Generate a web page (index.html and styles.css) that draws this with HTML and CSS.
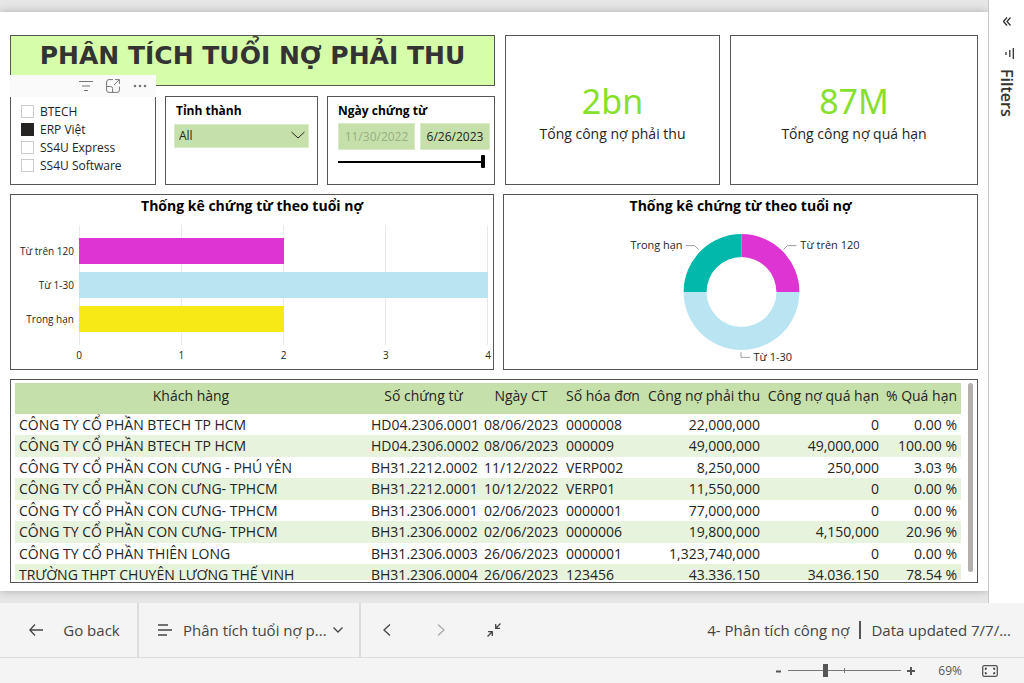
FILE: index.html
```html
<!DOCTYPE html>
<html lang="vi">
<head>
<meta charset="utf-8">
<meta name="viewport" content="width=device-width, initial-scale=1">
<title>Phân tích tuổi nợ phải thu</title>
<link rel="stylesheet" href="styles.css">
</head>
<body>
<div class="app">
  <div class="workspace">
    <main class="stage">
      <div class="report">
        <section class="row row-top">
          <div class="lead">
            <h1 class="panel title">PHÂN TÍCH TUỔI NỢ PHẢI THU</h1>
            <div class="slicers">
              <div class="panel slicer company">
                <div class="visual-header">
                  <button type="button" aria-label="Filter">
                    <svg width="14" height="12" viewBox="0 0 14 12"><path d="M0 1.500h14M3 6h8M5 10.500h4"/></svg>
                  </button>
                  <button type="button" aria-label="Focus mode">
                    <svg width="14" height="14" viewBox="0 0 14 14"><path d="M7 .6H3A2.400 2.400 0 0 0 .6 3v8A2.400 2.400 0 0 0 3 13.400h8a2.400 2.400 0 0 0 2.400-2.400V7.500M.6 7.500h4a2 2 0 0 1 2 2v3.900M8 6l5.200-5.200M9 .6h4.400V5"/></svg>
                  </button>
                  <button type="button" aria-label="More options">
                    <svg class="dots" width="14" height="4" viewBox="0 0 14 4"><circle cx="2" cy="2" r="1.300"/><circle cx="7" cy="2" r="1.300"/><circle cx="12" cy="2" r="1.300"/></svg>
                  </button>
                </div>
                <label class="check"><input type="checkbox">BTECH</label>
                <label class="check"><input type="checkbox" checked>ERP Việt</label>
                <label class="check"><input type="checkbox">SS4U Express</label>
                <label class="check"><input type="checkbox">SS4U Software</label>
              </div>
              <div class="panel slicer province">
                <label class="slicer-title" for="province">Tỉnh thành</label>
                <div class="dropdown">
                  <select id="province"><option>All</option></select>
                  <svg width="14" height="8" viewBox="0 0 14 8"><path d="M.5 1L7 7l6.500-6"/></svg>
                </div>
              </div>
              <div class="panel slicer dates">
                <div class="slicer-title">Ngày chứng từ</div>
                <div class="date-row">
                  <input class="date muted" type="text" value="11/30/2022" aria-label="Từ ngày">
                  <input class="date" type="text" value="6/26/2023" aria-label="Đến ngày">
                </div>
                <input class="date-range" type="range" min="0" max="100" value="100" aria-label="Khoảng ngày">
              </div>
            </div>
          </div>
          <div class="panel card"><div class="value">2bn</div><div class="caption">Tổng công nợ phải thu</div></div>
          <div class="panel card"><div class="value">87M</div><div class="caption">Tổng công nợ quá hạn</div></div>
        </section>

        <section class="row row-charts">
          <div class="panel chart">
            <h2>Thống kê chứng từ theo tuổi nợ</h2>
            <div class="bar-chart">
              <div class="categories"><span>Từ trên 120</span><span>Từ 1-30</span><span>Trong hạn</span></div>
              <div class="plot">
                <div class="gridlines"><i></i><i></i><i></i><i></i></div>
                <div class="bars">
                  <div class="bar magenta" style="width:50%"></div>
                  <div class="bar sky" style="width:100%"></div>
                  <div class="bar yellow" style="width:50%"></div>
                </div>
              </div>
              <div class="axis"><span>0</span><span>1</span><span>2</span><span>3</span><span>4</span></div>
            </div>
          </div>
          <div class="panel chart">
            <h2>Thống kê chứng từ theo tuổi nợ</h2>
            <svg class="donut" viewBox="0 0 474 148" role="img" aria-label="Thống kê chứng từ theo tuổi nợ">
              <path fill="#dd34d3" d="M238 15a58 58 0 0 1 58 58h-23a35 35 0 0 0-35-35z"/>
              <path fill="#b9e5f3" d="M296 73a58 58 0 0 1-116 0h23a35 35 0 0 0 70 0z"/>
              <path fill="#01b8aa" d="M180 73a58 58 0 0 1 58-58v23a35 35 0 0 0-35 35z"/>
              <path class="leader" d="M182 26.500h9l4 4M280 30.500l4-4h9M237.500 133v5.500h9"/>
              <text x="179" y="30" text-anchor="end">Trong hạn</text>
              <text x="297" y="30">Từ trên 120</text>
              <text x="250" y="142">Từ 1-30</text>
            </svg>
          </div>
        </section>

        <section class="panel table-panel">
          <div class="table-clip">
            <table>
              <colgroup><col><col class="c-doc"><col class="c-date"><col class="c-inv"><col class="c-due"><col class="c-over"><col class="c-pct"></colgroup>
              <thead><tr><th>Khách hàng</th><th>Số chứng từ</th><th>Ngày CT</th><th>Số hóa đơn</th><th>Công nợ phải thu</th><th>Công nợ quá hạn</th><th>% Quá hạn</th></tr></thead>
              <tbody>
                <tr><td>CÔNG TY CỔ PHẦN BTECH TP HCM</td><td>HD04.2306.0001</td><td>08/06/2023</td><td>0000008</td><td>22,000,000</td><td>0</td><td>0.00 %</td></tr>
                <tr><td>CÔNG TY CỔ PHẦN BTECH TP HCM</td><td>HD04.2306.0002</td><td>08/06/2023</td><td>000009</td><td>49,000,000</td><td>49,000,000</td><td>100.00 %</td></tr>
                <tr><td>CÔNG TY CỔ PHẦN CON CƯNG - PHÚ YÊN</td><td>BH31.2212.0002</td><td>11/12/2022</td><td>VERP002</td><td>8,250,000</td><td>250,000</td><td>3.03 %</td></tr>
                <tr><td>CÔNG TY CỔ PHẦN CON CƯNG- TPHCM</td><td>BH31.2212.0001</td><td>10/12/2022</td><td>VERP01</td><td>11,550,000</td><td>0</td><td>0.00 %</td></tr>
                <tr><td>CÔNG TY CỔ PHẦN CON CƯNG- TPHCM</td><td>BH31.2306.0001</td><td>02/06/2023</td><td>0000001</td><td>77,000,000</td><td>0</td><td>0.00 %</td></tr>
                <tr><td>CÔNG TY CỔ PHẦN CON CƯNG- TPHCM</td><td>BH31.2306.0002</td><td>02/06/2023</td><td>0000006</td><td>19,800,000</td><td>4,150,000</td><td>20.96 %</td></tr>
                <tr><td>CÔNG TY CỔ PHẦN THIÊN LONG</td><td>BH31.2306.0003</td><td>26/06/2023</td><td>0000001</td><td>1,323,740,000</td><td>0</td><td>0.00 %</td></tr>
                <tr><td>TRƯỜNG THPT CHUYÊN LƯƠNG THẾ VINH</td><td>BH31.2306.0004</td><td>26/06/2023</td><td>123456</td><td>43,336,150</td><td>34,036,150</td><td>78.54 %</td></tr>
              </tbody>
            </table>
          </div>
          <div class="scroll-thumb"></div>
        </section>
      </div>
    </main>
    <aside class="filters">
      <button type="button" aria-label="Expand filters">
        <svg width="8" height="9" viewBox="0 0 8 9"><path d="M4 .5l-3.500 4 3.500 4M7.500 .5l-3.500 4 3.500 4"/></svg>
      </button>
      <svg width="9" height="11" viewBox="0 0 9 11"><path d="M8.300 0v11M4.800 2v7M1 4v3"/></svg>
      <span>Filters</span>
    </aside>
  </div>

  <footer class="nav-bar">
    <button type="button" class="nav-item back">
      <svg width="14" height="12" viewBox="0 0 14 12"><path d="M6 .5L.8 6 6 11.500M1 6h13"/></svg>
      Go back
    </button>
    <button type="button" class="nav-item pages">
      <svg width="14" height="12" viewBox="0 0 14 12"><path d="M0 1h10M0 6h14M0 11h9"/></svg>
      Phân tích tuổi nợ p...
      <svg class="chev" width="10" height="6" viewBox="0 0 10 6"><path d="M.5 .5L5 5 9.500 .5"/></svg>
    </button>
    <div class="pager">
      <button type="button" aria-label="Previous page"><svg width="8" height="12" viewBox="0 0 8 12"><path d="M7 .5L1 6l6 5.500"/></svg></button>
      <button type="button" class="off" aria-label="Next page"><svg width="8" height="12" viewBox="0 0 8 12"><path d="M1 .5L7 6l-6 5.500"/></svg></button>
      <button type="button" aria-label="Exit full screen"><svg width="14" height="14" viewBox="0 0 14 14"><path d="M13.500 .5L9 5M8.700 1v4.300H13M.5 13.500L5 9M1 8.700h4.300V13"/></svg></button>
    </div>
    <div class="status"><span>4- Phân tích công nợ</span><span class="updated">Data updated 7/7/...</span></div>
  </footer>

  <div class="zoom-bar">
    <button type="button" aria-label="Zoom out"><svg width="8" height="8" viewBox="0 0 8 8"><path d="M2 4.500h5"/></svg></button>
    <div class="zoom-track"><input type="range" min="0" max="100" value="32" aria-label="Zoom"></div>
    <button type="button" aria-label="Zoom in"><svg width="8" height="8" viewBox="0 0 8 8"><path d="M0 4h8M4 0v8"/></svg></button>
    <output>69%</output>
    <button type="button" aria-label="Fit to page"><svg class="fit" width="16" height="12" viewBox="0 0 16 12"><rect x=".7" y=".7" width="14.600" height="10.600" rx="1.500"/><path d="M3.500 5V3.500H5M11 3.500h1.500V5M12.500 7v1.500H11M5 8.500H3.500V7"/></svg></button>
  </div>
</div>
</body>
</html>
```
FILE: styles.css
```css
* { box-sizing: border-box; }
body {
  margin: 0;
  font-family: "Open Sans", "Noto Sans", sans-serif;
  color: #252423;
}
h1, h2 { margin: 0; }
button, input, select { font: inherit; color: inherit; }
button { border: 0; padding: 0; background: none; display: flex; align-items: center; justify-content: center; }
svg { flex: none; fill: none; stroke: currentColor; stroke-width: 1; }

.app { display: flex; flex-direction: column; min-height: 100vh; }
.workspace { flex: 1; display: flex; }

.stage { flex: 1; min-width: 0; padding: 12px 0; background: #e6e6e6; }
.report {
  height: 100%;
  display: flex;
  flex-direction: column;
  gap: 9px;
  padding: 23px 10px 8px;
  background: #fff;
  box-shadow: 0 0 8px rgba(0, 0, 0, .25);
}
.panel { border: 1px solid #555; background: #fff; }
.row { display: grid; }

/* Title, slicers and cards */
.row-top { grid-template-columns: 485fr 215fr 248fr; gap: 10px; }
.lead { display: flex; flex-direction: column; gap: 10px; }
.title {
  height: 51px;
  background: #d5fdaa;
  color: #333;
  text-align: center;
  font: bold 25px/40px "DejaVu Sans", sans-serif;
  white-space: nowrap;
}
.slicers { display: grid; grid-template-columns: 146fr 153fr 168fr; gap: 9px; height: 89px; }
.slicer { min-width: 0; position: relative; }
.visual-header {
  position: absolute;
  left: -1px;
  right: -1px;
  bottom: 100%;
  height: 22px;
  display: flex;
  justify-content: flex-end;
  gap: 13px;
  padding-right: 9px;
  background: #fafafa;
  color: #777;
}
.dots { fill: currentColor; stroke: none; }
.company { padding: 5px 10px; }
.check { display: flex; align-items: center; gap: 6px; height: 18px; font-size: 12px; white-space: nowrap; }
.check input {
  appearance: none;
  width: 13px;
  height: 13px;
  margin: 0;
  border: 1px solid #ccc;
  background: #fff;
}
.check input:checked { background: #252423; border-color: #252423; }
.slicer-title { display: block; height: 21px; font: bold 12px/18px "Open Sans", sans-serif; color: #000; }
.province { padding: 5px 8px; }
.province .slicer-title { padding-left: 2px; }
.dropdown { position: relative; height: 24px; }
.dropdown select {
  appearance: none;
  width: 100%;
  height: 100%;
  padding: 0 4px;
  border: 1px solid #d9ebc8;
  border-radius: 0;
  background: #c6e0ab;
  font-size: 12px;
}
.dropdown svg { position: absolute; right: 4px; top: 8px; pointer-events: none; }
.dates { padding: 5px 4px 0 10px; }
.date-row { display: grid; grid-template-columns: 77fr 70fr; gap: 5px; }
.date {
  width: 100%;
  min-width: 0;
  height: 27px;
  padding: 0;
  border: 1px solid #d9ebc8;
  background: #c6e0ab;
  text-align: center;
  font-size: 12px;
}
.date.muted { color: #98ae82; }
.date-range {
  appearance: none;
  display: block;
  width: 147px;
  height: 13px;
  margin: 5px 0 0;
  background: linear-gradient(#000, #000) center / 100% 2px no-repeat;
}
.date-range::-webkit-slider-thumb { appearance: none; width: 4px; height: 13px; border-radius: 1px; background: #000; }
.card { display: flex; flex-direction: column; align-items: center; padding-top: 43px; }
.value { font: 34px/44px "Noto Sans", sans-serif; color: #86e02c; }
.caption { font-size: 14px; line-height: 22px; white-space: nowrap; }

/* Charts */
.row-charts { grid-template-columns: 484fr 475fr; gap: 9px; height: 176px; }
.chart { display: flex; flex-direction: column; min-width: 0; }
.chart h2 { font-size: 14px; line-height: 22px; text-align: center; color: #000; }
.bar-chart {
  flex: 1;
  display: grid;
  grid-template: 1fr 22px / 52px 1fr;
  column-gap: 7px;
  padding: 8px 5px 2px 9px;
  font-size: 10px;
}
.categories { display: grid; grid-template-rows: repeat(3, 26px); gap: 8px; align-content: center; padding-right: 2px; justify-items: end; line-height: 26px; white-space: nowrap; }
.plot { display: grid; }
.gridlines, .bars { grid-area: 1 / 1; display: grid; }
.gridlines { grid-template-columns: repeat(4, 1fr); border-right: 1px solid #e9e9e9; }
.gridlines i { border-left: 1px solid #e9e9e9; }
.bars { grid-template-rows: repeat(3, 26px); gap: 8px; align-content: center; }
.magenta { background: #dd34d3; }
.sky { background: #b9e5f3; }
.yellow { background: #f6e916; }
.axis { grid-column: 2; display: flex; justify-content: space-between; margin: 0 -5px; line-height: 20px; }
.axis span { width: 10px; text-align: center; }
.donut { flex: 1; min-height: 0; width: 100%; stroke: none; }
.donut text { font: 11px "Open Sans", sans-serif; fill: #252423; }
.leader { stroke: #a0a0a0; }

/* Table */
.table-panel { flex: 1; display: flex; gap: 7px; padding: 3px 4px 2px; }
.table-clip { flex: 1; height: 197px; overflow: hidden; }
table { width: 100%; table-layout: fixed; border-collapse: collapse; font-size: 14px; }
.c-doc { width: 113px; }
.c-date { width: 82px; }
.c-inv { width: 82px; }
.c-due { width: 120px; }
.c-over { width: 119px; }
.c-pct { width: 78px; }
th { height: 31px; padding: 0 0 7px; background: #c6e0ab; font-weight: normal; white-space: nowrap; }
td { height: 21px; padding: 0 4px; line-height: 20px; white-space: nowrap; }
th:nth-child(n+5), td:nth-child(n+5) { text-align: right; padding-right: 4px; }
tbody tr:nth-child(even) { background: #e8f3dd; }
tbody tr:nth-child(even) td { height: 22px; }
.scroll-thumb { width: 5px; height: 189px; border-radius: 3px; background: #b3b0ad; }

/* Filter pane */
.filters {
  width: 36px;
  display: flex;
  flex-direction: column;
  align-items: center;
  border-left: 1px solid #c8c8c8;
  padding-top: 17px;
  background: #fff;
  color: #333;
}
.filters svg { stroke-width: 1.3; }
.filters > svg { margin: 22px 0 10px 6px; }
.filters span { writing-mode: vertical-rl; font: 600 16px/20px "Open Sans", sans-serif; }

/* Bottom bars */
.nav-bar { display: flex; height: 55px; border-bottom: 1px solid #dcdcdc; background: #f4f4f4; color: #444; font-size: 15px; white-space: nowrap; }
.nav-bar svg { stroke-width: 1.3; }
.nav-item { border-right: 2px solid #dcdcdc; }
.back { width: 139px; gap: 20px; padding-left: 12px; }
.pages { width: 222px; gap: 11px; justify-content: flex-start; padding-left: 19px; }
.chev { margin-left: -5px; }
.pager { display: flex; align-items: center; gap: 46px; padding-left: 22px; }
.pager .off { color: #aaa; }
.pager button:last-child { margin-left: -4px; }
.status { margin-left: auto; display: flex; align-items: center; padding-right: 13px; }
.updated { margin-left: 10px; padding-left: 10px; border-left: 2px solid #555; line-height: 18px; }
.zoom-bar { display: flex; align-items: center; justify-content: flex-end; height: 25px; padding-right: 26px; background: #f4f4f4; color: #555; font-size: 12px; }
.zoom-bar svg { stroke-width: 2; }
.zoom-bar .fit { stroke-width: 1.3; }
.zoom-track { width: 113px; margin: 0 6px; display: flex; background: linear-gradient(#777, #777) 50% 50% / 1px 5px no-repeat; }
.zoom-track input {
  appearance: none;
  width: 100%;
  height: 13px;
  margin: 0;
  background: linear-gradient(#777, #777) center / 100% 1px no-repeat;
}
.zoom-track input::-webkit-slider-thumb { appearance: none; width: 5px; height: 13px; background: #555; }
.zoom-bar output { margin: 0 20px 0 23px; }
```
